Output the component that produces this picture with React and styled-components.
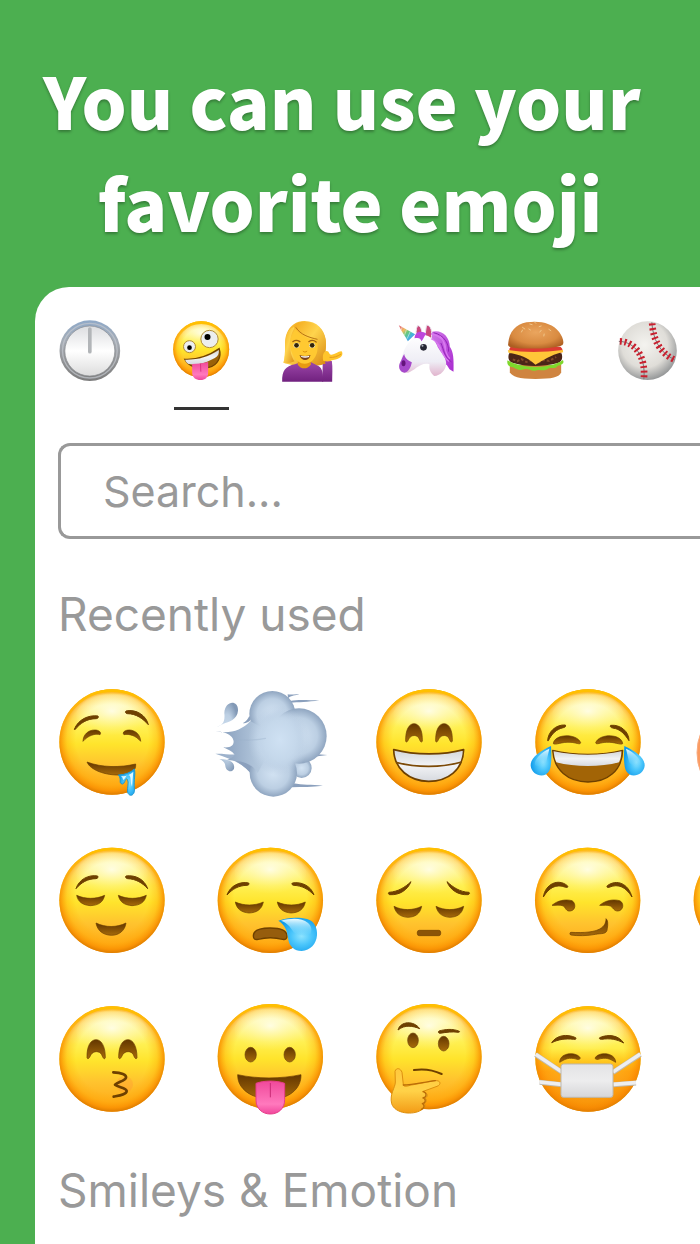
import React from 'react';
import styled, { createGlobalStyle } from 'styled-components';

const GlobalStyle = createGlobalStyle`
    body {
        margin: 0;
        background-color: #4caf50;
    }
    * {
        box-sizing: border-box;
    }
`;

const Page = styled.main`
    min-height: 100vh;
    display: flex;
    flex-direction: column;
    overflow: hidden;
    background-color: #4caf50;
    font-family: Inter, 'Liberation Sans', sans-serif;
`;

const Headline = styled.h1`
    margin: 0;
    padding: 48px 0 35px;
    color: #fff;
    font-family: 'Noto Sans CJK JP', 'Noto Sans', sans-serif;
    font-size: 71px;
    font-weight: 900;
    line-height: 102px;
    text-align: center;
    white-space: pre;
    text-shadow: 0 2px 3px rgba(0, 0, 0, 0.3);
`;

const Picker = styled.section`
    flex: 1;
    margin-left: 35px;
    background-color: #fff;
    border-top-left-radius: 34px;
`;

const Tabs = styled.nav`
    display: flex;
    padding-top: 28px;
`;

const Tab = styled.button`
    flex: none;
    width: 111px;
    padding: 0;
    border: 0;
    background: none;
    display: flex;
    flex-direction: column;
    align-items: center;
    gap: 20px;
    cursor: pointer;
    &::after {
        content: '';
        width: 55px;
        height: 3px;
        background-color: ${({ $active }) => ($active ? '#333' : 'transparent')};
    }
`;

const SearchBar = styled.form`
    display: flex;
    padding: 33px 0 0 23px;
`;

const SearchInput = styled.input`
    flex: 1;
    min-width: 0;
    height: 96px;
    padding: 0 0 0 42px;
    border: 3px solid #999;
    border-right: 0;
    border-radius: 12px 0 0 12px;
    outline: none;
    background-color: #fff;
    color: #333;
    font-family: inherit;
    font-size: 43px;
    &::placeholder {
        color: #999;
        opacity: 1;
    }
`;

const Category = styled.h2`
    margin: ${({ $top }) => $top}px 0 0 23px;
    color: #999;
    font-size: 46px;
    font-weight: 400;
    line-height: 56px;
    white-space: nowrap;
`;

const EmojiGrid = styled.div`
    display: grid;
    grid-template-columns: repeat(5, 120px);
    gap: 38px 39px;
    padding: 40px 0 0 17px;
`;

const EmojiButton = styled.button`
    padding: 0;
    border: 0;
    background: none;
    cursor: pointer;
`;

const Drawing = styled.svg`
    display: block;
    width: ${({ $size }) => $size}px;
    height: ${({ $size }) => $size}px;
`;

const SharedDefs = styled.svg`
    position: absolute;
    width: 0;
    height: 0;
`;

const Gradients = () => (
    <SharedDefs aria-hidden="true">
        <defs>
            <linearGradient id="skin" x1="0" y1="0" x2="0" y2="1">
                <stop offset="0" stopColor="#ffd21c" />
                <stop offset=".06" stopColor="#fff7b0" />
                <stop offset=".16" stopColor="#fffab4" />
                <stop offset=".36" stopColor="#fff052" />
                <stop offset=".52" stopColor="#ffe42c" />
                <stop offset=".72" stopColor="#ffc32e" />
                <stop offset="1" stopColor="#ffa314" />
            </linearGradient>
            <radialGradient id="rim" cx=".5" cy=".48" r=".52">
                <stop offset=".66" stopColor="#ffb000" stopOpacity="0" />
                <stop offset=".82" stopColor="#ffa400" stopOpacity=".35" />
                <stop offset=".93" stopColor="#f98f00" stopOpacity=".8" />
                <stop offset="1" stopColor="#dd7c00" />
            </radialGradient>
            <radialGradient id="shine" cx=".5" cy=".4" r=".55">
                <stop offset="0" stopColor="#fff" stopOpacity=".7" />
                <stop offset="1" stopColor="#fff8a0" stopOpacity="0" />
            </radialGradient>
            <linearGradient id="topRim" x1="0" y1="0" x2="0" y2="1">
                <stop offset="0" stopColor="#ffc000" />
                <stop offset=".5" stopColor="#ffa000" stopOpacity="0" />
            </linearGradient>
            <linearGradient id="brown" x1="0" y1="0" x2="0" y2="1">
                <stop offset="0" stopColor="#633700" />
                <stop offset="1" stopColor="#a66a0a" />
            </linearGradient>
            <linearGradient id="teeth" x1="0" y1="0" x2="0" y2="1">
                <stop offset="0" stopColor="#d3d6da" />
                <stop offset=".5" stopColor="#f2f3f5" />
                <stop offset="1" stopColor="#d6d9df" />
            </linearGradient>
            <linearGradient id="tongue" x1="0" y1="0" x2="0" y2="1">
                <stop offset="0" stopColor="#f0499a" />
                <stop offset=".7" stopColor="#ff79bd" />
                <stop offset="1" stopColor="#f0469c" />
            </linearGradient>
            <radialGradient id="tear" cx=".6" cy=".55" r=".6">
                <stop offset="0" stopColor="#8fe4ff" />
                <stop offset=".45" stopColor="#49c5fb" />
                <stop offset="1" stopColor="#119bea" />
            </radialGradient>
            <linearGradient id="tearShine" x1="0" y1="0" x2="0" y2="1">
                <stop offset="0" stopColor="#effcff" />
                <stop offset="1" stopColor="#62cefb" stopOpacity=".2" />
            </linearGradient>
            <radialGradient id="cloud" cx=".5" cy=".5" r=".55">
                <stop offset="0" stopColor="#d3e3f3" />
                <stop offset=".6" stopColor="#bccfe3" />
                <stop offset="1" stopColor="#8299b6" />
            </radialGradient>
            <linearGradient id="wind" x1="0" y1="0" x2="1" y2="0">
                <stop offset="0" stopColor="#8299b8" />
                <stop offset=".7" stopColor="#b4c8dd" />
                <stop offset="1" stopColor="#c5d8ea" />
            </linearGradient>
            <radialGradient id="cloudCore">
                <stop offset="0" stopColor="#cfe1f3" />
                <stop offset=".65" stopColor="#c5d8eb" stopOpacity=".95" />
                <stop offset="1" stopColor="#b9cce1" stopOpacity="0" />
            </radialGradient>
            <linearGradient id="steel" x1="0" y1="0" x2="0" y2="1">
                <stop offset="0" stopColor="#8fa9c8" />
                <stop offset=".35" stopColor="#a5acb5" />
                <stop offset=".6" stopColor="#96989b" />
                <stop offset="1" stopColor="#7c7c7c" />
            </linearGradient>
            <linearGradient id="dial" x1="0" y1="0" x2="0" y2="1">
                <stop offset="0" stopColor="#dcdde0" />
                <stop offset=".5" stopColor="#fff" />
                <stop offset="1" stopColor="#dcdcdc" />
            </linearGradient>
            <linearGradient id="hair" x1="0" y1="0" x2="1" y2="1">
                <stop offset="0" stopColor="#f3a81b" />
                <stop offset=".45" stopColor="#ffd44d" />
                <stop offset="1" stopColor="#d98a12" />
            </linearGradient>
            <linearGradient id="blouse" x1="0" y1="0" x2="0" y2="1">
                <stop offset="0" stopColor="#9b46a8" />
                <stop offset="1" stopColor="#71217f" />
            </linearGradient>
            <linearGradient id="coat" x1="0" y1="0" x2="0" y2="1">
                <stop offset="0" stopColor="#fff" />
                <stop offset=".65" stopColor="#eeedf5" />
                <stop offset="1" stopColor="#e1b4cd" />
            </linearGradient>
            <linearGradient id="mane" x1="0" y1="0" x2="1" y2="1">
                <stop offset="0" stopColor="#d17be8" />
                <stop offset="1" stopColor="#a92bd0" />
            </linearGradient>
            <linearGradient id="horn" x1="0" y1="0" x2="1" y2="1">
                <stop offset=".05" stopColor="#e26674" />
                <stop offset=".3" stopColor="#f3bd62" />
                <stop offset=".48" stopColor="#69c978" />
                <stop offset=".7" stopColor="#42b6df" />
                <stop offset="1" stopColor="#8056d7" />
            </linearGradient>
            <radialGradient id="bun" cx=".5" cy=".4" r=".65">
                <stop offset="0" stopColor="#eaa55e" />
                <stop offset=".65" stopColor="#d98b41" />
                <stop offset="1" stopColor="#ad5f22" />
            </radialGradient>
            <radialGradient id="ball" cx=".45" cy=".4" r=".6">
                <stop offset="0" stopColor="#f4f3ef" />
                <stop offset=".65" stopColor="#dfddd8" />
                <stop offset="1" stopColor="#97999a" />
            </radialGradient>
            <linearGradient id="hand" x1="0" y1="0" x2="0" y2="1">
                <stop offset="0" stopColor="#ffc83d" />
                <stop offset=".5" stopColor="#ffd248" />
                <stop offset="1" stopColor="#f39b16" />
            </linearGradient>
            <linearGradient id="mask" x1="0" y1="0" x2="0" y2="1">
                <stop offset="0" stopColor="#e3e3e5" />
                <stop offset=".5" stopColor="#ededee" />
                <stop offset="1" stopColor="#d6d6d8" />
            </linearGradient>
            <linearGradient id="flush" x1="0" y1="0" x2="0" y2="1">
                <stop offset=".4" stopColor="#ff8a00" stopOpacity="0" />
                <stop offset=".62" stopColor="#ff8400" stopOpacity=".55" />
                <stop offset="1" stopColor="#f07d00" stopOpacity=".4" />
            </linearGradient>
        </defs>
    </SharedDefs>
);

const Emoji = ({ x, y, span = 360, children }) => (
    <Drawing $size={span / 3} viewBox={`${x} ${y} ${span} ${span}`} aria-hidden="true">
        {children}
    </Drawing>
);

const Head = ({ cx, cy, r = 158 }) => (
    <g>
        <circle cx={cx} cy={cy} r={r} fill="url(#skin)" />
        <circle cx={cx} cy={cy} r={r} fill="url(#rim)" />
        <ellipse cx={cx} cy={cy - r * 0.5} rx={r * 0.68} ry={r * 0.42} fill="url(#shine)" />
        <circle cx={cx} cy={cy} r={r - 4} fill="none" stroke="url(#topRim)" strokeWidth="8" />
    </g>
);

const Lines = ({ d, width = 8 }) => (
    <path d={d} fill="none" stroke="#6e4000" strokeWidth={width} strokeLinecap="round" strokeLinejoin="round" />
);

const Shape = ({ d }) => <path d={d} fill="url(#brown)" stroke="#6a3c00" strokeWidth="2" strokeLinejoin="round" />;

// eyebrows are filled so that they swell in the middle
const Brows = ({ d }) => <path d={d} fill="#6e4000" stroke="#6e4000" strokeWidth="3" strokeLinejoin="round" />;

const Clock = () => (
    <Emoji x={73.5} y={105} span={216}>
        <circle cx="178" cy="212" r="91" fill="url(#steel)" />
        <circle cx="178" cy="212" r="82" fill="none" stroke="#c3c8ce" strokeWidth="4" opacity=".7" />
        <circle cx="178" cy="213" r="75" fill="url(#dial)" stroke="#8a8d91" strokeWidth="2" />
        <path d="M178 147v68" stroke="#b2b5b8" strokeWidth="11" strokeLinecap="round" />
    </Emoji>
);

const Zany = () => (
    <Emoji x={406.5} y={105} span={216}>
        <Head cx={512} cy={208} r={84} />
        <circle cx="477" cy="200" r="18" fill="#eceef0" stroke="#b18b35" strokeWidth="3" />
        <circle cx="477" cy="203" r="7" fill="#000" />
        <circle cx="537" cy="177" r="26" fill="#eceef0" stroke="#b18b35" strokeWidth="3" />
        <circle cx="531" cy="171" r="9" fill="#000" />
        <path d="M463 238c38 2 70-9 103-32 8 25-5 51-31 56-34 7-62-3-72-24z" fill="#9b6208" stroke="#704100" strokeWidth="4" />
        <path d="M464 239c38 1 70-8 101-29 1 11-2 19-12 24-24 14-55 23-79 18-5-3-8-7-10-13z" fill="url(#teeth)" />
        <path d="M485 252c16 0 32-2 48-6v32c0 14-9 22-23 22s-25-8-25-22z" fill="url(#tongue)" />
        <path d="M510 251l1 24" stroke="#dc3383" strokeWidth="3" />
    </Emoji>
);

const Woman = () => (
    <Emoji x={49.5} y={45} span={216}>
        <path d="M69 188c10-30-1-62 10-88 9-24 29-37 53-37 38 0 60 26 64 58 3 25-6 49-1 70-38 12-90 10-126-3z" fill="url(#hair)" />
        <path d="M65 245c-1-33 10-46 38-52l17-6h32l17 9c14 5 19 16 19 49z" fill="url(#blouse)" />
        <path d="M187 183h27c3 20 1 41 1 62h-30z" fill="url(#blouse)" />
        <path d="M112 177h39v17c-11 15-30 14-39 0z" fill="#e79a12" />
        <path d="M89 128c1-15 8-30 16-42l60 25c8 14 8 30 5 44-5 21-19 36-38 36-27-1-43-32-43-63z" fill="#ffc931" />
        <path d="M104 80c-9 16-14 26-16 50 0 22 5 42 14 54-13 6-25 7-33 4 9-29 0-62 11-88 4-9 13-18 24-20z" fill="url(#hair)" />
        <path d="M100 80c9-18 39-18 57-9 27 12 38 33 39 54 1 24-6 47-1 66-13 2-19 0-30-4 8-20 10-43 7-66-26-4-55-12-72-41z" fill="url(#hair)" />
        <path d="M106 82c14 22 38 30 65 36" fill="none" stroke="#b87412" strokeWidth="3" />
        <path d="M97 125c8-6 14-5 21 0M145 125c8-6 15-5 22 1" fill="none" stroke="#9d6312" strokeWidth="4" strokeLinecap="round" />
        <ellipse cx="108" cy="136" rx="9" ry="8" fill="#eee8c8" />
        <ellipse cx="155" cy="136" rx="9" ry="8" fill="#eee8c8" />
        <circle cx="108" cy="136" r="7" fill="#332307" />
        <circle cx="155" cy="136" r="7" fill="#332307" />
        <path d="M117 165c11 4 22 4 33 0-3 19-28 21-33 0z" fill="#79411c" />
        <path d="M120 167c9 2 18 2 26 0v4c-8 3-17 3-23 0z" fill="#fff" />
        <path d="M127 153c4 4 8 4 13 0" fill="none" stroke="#db910d" strokeWidth="3" />
        <path d="M188 182c-3-16 1-28 10-29 9 0 6 10 14 11 11 1 21-11 31-10 4 4 4 13-3 18-13 9-27 8-29 11-8 2-17 2-23-1z" fill="#ffc52b" />
        <path d="M207 172c13 1 23-2 35-10" fill="none" stroke="#e49a19" strokeWidth="3" />
    </Emoji>
);

const Unicorn = () => (
    <Emoji x={382.5} y={45} span={216}>
        <path d="M415 76l49 27-22 21c-7-15-20-29-27-48z" fill="url(#horn)" />
        <path d="M425 81l-3 10M438 88l-6 18M449 95l-9 21" stroke="#fff" strokeWidth="2" opacity=".7" />
        <path d="M510 97c30-12 57 10 58 43 11 16 12 35 11 75l-12-7-8-13c-27-12-39-47-49-98z" fill="url(#mane)" />
        <path d="M471 77c10-1 15 15 14 37l-15 3c-5-15-4-30 1-40zM498 75c14 1 18 20 14 42h-20z" fill="#c9487c" stroke="#eae4ef" strokeWidth="3" />
        <path d="M430 153c10-24 29-43 50-47 25-5 45 15 52 36 8 15 24 28 25 47 0 22-17 38-36 39-11-10-16-19-14-35-28-8-44 20-64 25-21 2-31-12-24-29 4-14 6-24 11-36z" fill="url(#coat)" />
        <path d="M431 162c2 13 11 19 23 25-3 15-9 29-22 31-15-1-20-18-13-31 5-8 7-18 12-25z" fill="#a74acb" />
        <ellipse cx="429" cy="190" rx="6" ry="9" fill="#64147c" />
        <circle cx="489" cy="142" r="10" fill="#252533" />
        <circle cx="486" cy="137" r="3" fill="#aeb1be" />
        <path d="M462 115c2-22 21-24 37-13-8 2-7 13-17 22 0-8-6-12-20-9z" fill="#be45dd" />
        <path d="M513 102c24 4 44 21 42 48M535 103c22 16 12 51 32 72M531 134c14 14 12 32 33 49M513 117c18 7 23 16 28 29" fill="none" stroke="#d878ef" strokeWidth="4" strokeLinecap="round" />
        <path d="M519 98c33 7 47 35 45 57M541 129c10 21 8 39 32 57" fill="none" stroke="#9522b9" strokeWidth="3" />
    </Emoji>
);

const Burger = () => (
    <Emoji x={55.5} y={45} span={216}>
        <path d="M88 195h154v22c-5 15-28 20-77 20-51 0-70-7-77-20z" fill="#cf8440" />
        <path d="M86 160c50-7 103-8 157 0 5 14 1 27-14 30-45 11-93 11-131-1-14-4-17-17-12-29z" fill="#4b2517" />
        <path d="M97 178l13 6 12-7 16 9 16-6 18 8 17-8 17 3 21-12" fill="none" stroke="#80492a" strokeWidth="6" strokeDasharray="8 6" />
        <path d="M81 181c26 15 52 19 84 20 34-1 62-7 82-21 6 9-2 14-15 17-8 11-17 5-27 8-15 12-25 1-42 7-14 1-19-8-33-4-13 6-23-1-32-6-13-1-20-9-17-21z" fill="#7fd82c" />
        <path d="M91 140h149c8 7 8 15 0 19H94c-10-6-9-14-3-19z" fill="#dd3b32" />
        <path d="M82 150c45 8 107 8 165 0l1 7c-26 4-45 15-83 37-24-23-45-29-81-36z" fill="#ffc638" />
        <path d="M83 133c3-40 23-59 55-66 36-6 77 0 98 29 9 12 17 31 10 39-23 14-145 13-159 5-3-2-5-4-4-7z" fill="url(#bun)" />
        <path d="M126 82l7 5M148 72l7 2M176 80l6-2M178 96l4-5M123 96l3-6M145 87l5 3M191 102l-1 6M205 88l6 4M162 66l4 4" stroke="#f0c78b" strokeWidth="3" strokeLinecap="round" />
    </Emoji>
);

const Baseball = () => (
    <Emoji x={388.5} y={45} span={216}>
        <circle cx="501" cy="152" r="88" fill="url(#ball)" />
        <path d="M415 124c47 1 82 45 75 114M514 67c3 50 23 91 68 112" fill="none" stroke="#77777a" strokeWidth="3" />
        <path d="M418 124c45 1 79 45 72 114M515 70c3 48 23 88 65 108" fill="none" stroke="#c9202f" strokeWidth="20" strokeDasharray="6 8" />
    </Emoji>
);

const Drooling = () => (
    <Emoji x={6} y={6}>
        <Head cx={186} cy={186} />
        <Brows d="M73 148c11-29 42-44 71-40 2 4 1 7-5 8-28 0-48 13-64 33zM228 93c31-7 61 14 67 41-15-17-36-33-63-33-6-1-7-5-4-8z" />
        <Shape d="M99 184c1-21 16-34 35-34 14 0 21 8 16 14-14-4-36 2-51 20z" />
        <Shape d="M272 184c-1-20-15-33-34-34-15 0-22 8-16 14 15-3 35 2 50 20z" />
        <Shape d="M111 246c44 17 99 17 146 6 2 20-14 33-44 33-49 2-93-16-102-39z" />
        <path d="M205 285c21-1 36-7 48-18 4 14-2 31 0 59 3 20-15 27-20 11-2-15 5-30-1-39-6-7-7 14-15 14-13-2 0-15-12-27z" fill="url(#tear)" stroke="#1f98d1" strokeWidth="3" />
        <path d="M213 288c14 2 28-4 37-13l-4 45c-6-14-2-32-9-34-8-3-10 8-16 14-4-3-2-8-8-12z" fill="#dff8ff" />
    </Emoji>
);

const Dash = () => (
    <Emoji x={483} y={6}>
        <path d="M496 221c49-1 70 13 106-19l14 100c-24-46-58-60-120-81z" fill="#9db2cc" />
        <path d="M713 43c13 2 22-2 35 0-11 4-24 3-34 12zM720 63c28-6 54-2 88-2-34 6-62 5-89 8zM730 310c28 5 53 4 89 7-33 5-63 3-94 5zM795 222l37 3-40 5zM578 130c11-5 16-14 20-22l5 8c-4 9-11 13-25 14zM547 237c29 2 51 15 65 31v22c-22-25-37-37-65-53z" fill="#8ba0bd" />
        <circle cx="755" cy="264" r="30" fill="url(#cloud)" />
        <circle cx="667" cy="102" r="69" fill="url(#cloud)" />
        <circle cx="747" cy="168" r="83" fill="url(#cloud)" />
        <circle cx="670" cy="279" r="71" fill="url(#cloud)" />
        <path d="M497 154c43 8 77-2 104-31l82 46-60 110c-20-37-58-35-92-39 12-6 20-9 23-16-8-10-19-15-34-22 36 4 37-23 21-35-9-8-23-11-44-13z" fill="url(#wind)" />
        <ellipse cx="686" cy="182" rx="92" ry="106" fill="url(#cloudCore)" />
        <ellipse cx="690" cy="180" rx="74" ry="92" fill="url(#cloudCore)" />
        <path d="M556 178c32 5 62 2 90-3" fill="none" stroke="#9bb1ca" strokeWidth="4" opacity=".4" strokeLinecap="round" />
        <path d="M497 141c20-4 29-13 26-42 2-39 43-40 41-7-2 27-28 33-44 39-8 4-13 9-23 10zM508 238c37-1 47 13 44 28-8 15-25 6-26-8-1-10-6-16-18-20z" fill="url(#cloud)" />
    </Emoji>
);

const Beaming = () => (
    <Emoji x={15} y={6}>
        <Head cx={192} cy={186} />
        <Shape d="M122 184c-1-34 10-53 25-53 16 0 26 20 25 53-4 5-7-1-9-7-6-14-24-14-32 0-2 6-6 12-9 7z" />
        <Shape d="M212 184c-1-34 10-53 25-53 16 0 26 20 25 53-4 5-7-1-9-7-6-14-24-14-32 0-2 6-6 12-9 7z" />
        <path d="M86 209c63 17 151 17 210 0-2 61-47 95-105 95-58-1-103-36-105-95z" fill="url(#teeth)" stroke="#6e4000" strokeWidth="5" strokeLinejoin="round" />
        <path d="M93 247c61 16 135 17 197-1" fill="none" stroke="#7c4a07" strokeWidth="5" />
    </Emoji>
);

const Joy = () => (
    <Emoji x={492} y={6}>
        <Head cx={669} cy={186} />
        <Brows d="M548 182c1-26 24-49 53-47 2 4 0 7-6 8-21 4-35 19-45 39zM737 136c29-3 55 18 55 46-13-20-26-35-49-38-6-1-9-5-6-8z" />
        <Shape d="M565 191c3-30 70-32 82-3-2 8-14-1-32-1-24-2-43 9-50 4z" />
        <Shape d="M773 191c-3-30-69-32-81-3 2 8 14-1 32-1 24-2 43 9 49 4z" />
        <path d="M563 211c64 16 148 16 210 0-1 61-46 95-104 95-60-1-103-36-106-95z" fill="#a26406" stroke="#6e4000" strokeWidth="4" strokeLinejoin="round" />
        <path d="M566 214c62 14 143 14 203 0 0 12-2 23-7 33-55 15-132 15-188 0-5-11-7-22-8-33z" fill="url(#teeth)" />
        <path d="M558 198c-32 15-62 34-61 59 3 29 41 40 55 17 8-13 8-46 6-76z" fill="url(#tear)" />
        <path d="M778 198c32 15 62 34 61 59-3 29-41 40-55 17-8-13-8-46-6-76z" fill="url(#tear)" />
        <path d="M553 206c-28 13-46 33-43 50 13 5 31-2 34-11zM783 206c28 13 46 33 43 50-13 5-31-2-34-11z" fill="url(#tearShine)" />
    </Emoji>
);

const Flushed = () => (
    <Emoji x={969} y={6}>
        <circle cx="1155" cy="218" r="159" fill="#fb9a60" stroke="#f9ab80" strokeWidth="3" />
    </Emoji>
);

const Relieved = () => (
    <Emoji x={6} y={0}>
        <Head cx={186} cy={181} />
        <Brows d="M78 146c9-28 38-43 65-38 2 4 1 7-5 8-25 0-45 12-60 30zM228 108c28-4 56 10 65 38-16-18-36-29-60-30-6-1-8-5-5-8z" />
        <Shape d="M80 166c26 12 58 12 84 0-5 22-20 30-43 31-23-2-37-11-41-31z" />
        <Shape d="M205 166c26 12 58 12 84 0-5 22-20 30-43 31-23-2-37-11-41-31z" />
        <Shape d="M138 249c29 14 62 14 90 0-3 22-20 37-44 37-25-1-42-14-46-37z" />
    </Emoji>
);

const Sleepy = () => (
    <Emoji x={483} y={0}>
        <Head cx={661} cy={181} />
        <Brows d="M531 165c9-27 38-42 65-36 2 4 1 6-5 7-25 0-45 12-60 29zM727 129c28-5 56 9 65 36-16-17-36-28-60-29-6-1-8-4-5-7z" />
        <Shape d="M556 186c26 12 58 12 84 0-5 23-20 32-43 33-23-2-37-12-41-33z" />
        <Shape d="M682 186c26 12 58 12 84 0-5 23-20 32-43 33-23-2-37-12-41-33z" />
        <path d="M610 288c0-16 14-24 50-24s51 8 51 24c0 9-5 12-13 10-24-6-50-6-74 0-9 2-14-1-14-10z" fill="#965d0d" stroke="#6e4000" strokeWidth="4" />
        <path d="M685 242c28-11 63-11 86-5 22 6 32 27 30 49-2 26-20 46-46 47-22 0-37-15-40-34-4-27-8-43-30-57z" fill="url(#tear)" />
        <path d="M693 242c31-8 62-9 81 7 11 10 12 22 8 32-16 10-44 6-53-7-9-15-19-26-36-32z" fill="url(#tearShine)" />
    </Emoji>
);

const Pensive = () => (
    <Emoji x={15} y={0}>
        <Head cx={192} cy={181} />
        <Brows d="M72 157c27-2 48-15 66-32-10 24-33 41-64 39-4-1-5-5-2-7zM246 125c18 17 39 31 66 32 3 3 1 6-3 7-30 2-54-15-63-39z" />
        <Shape d="M87 199c25 13 57 13 83 0-5 23-19 32-42 33-23-2-36-12-41-33z" />
        <Shape d="M213 199c25 13 57 13 83 0-5 23-19 32-42 33-23-2-36-12-41-33z" />
        <rect x="157" y="271" width="70" height="16" rx="6" fill="#8b5407" stroke="#6e4000" strokeWidth="2" />
    </Emoji>
);

const Smirk = () => (
    <Emoji x={492} y={0}>
        <Head cx={668} cy={181} />
        <Brows d="M535 171c6-39 44-57 72-34 3 4 1 6-5 5-29-12-51 2-67 29zM727 137c29-21 63-6 74 34-17-28-40-42-69-29-5 1-8-1-5-5z" />
        <Shape d="M561 196c17-15 40-19 60-14 12 7 12 29-5 31-13 2-14-10-21-15-10-5-22-1-34-2z" />
        <Shape d="M704 196c17-15 40-19 60-14 15 7 11 30-5 31-12 1-15-11-23-15-9-4-20-1-32-2z" />
        <Shape d="M618 277c38 2 75 0 92-14 11-8 13-19 13-27 6 4 6 17 4 29-1 20-17 14-35 18-26 5-54 5-75 2-4-4-2-8 1-8z" />
    </Emoji>
);

const PlainFace = () => (
    <Emoji x={969} y={0}>
        <Head cx={1144} cy={181} />
    </Emoji>
);

const Kissing = () => (
    <Emoji x={6} y={9}>
        <Head cx={186} cy={192} />
        <Shape d="M111 188c-1-35 11-54 27-54s28 19 28 54c-3 8-8-1-11-9-6-12-25-12-32 0-4 8-9 17-12 9z" />
        <Shape d="M206 188c0-35 11-54 28-54 15 0 27 19 27 54-3 8-8-1-11-9-6-12-25-12-32 0-4 8-9 17-12 9z" />
        <circle cx="224" cy="268" r="25" fill="#ff803d" opacity=".22" />
        <path d="M190 232c24 1 40 7 38 16-2 9-24 13-33 21 9 8 34 9 35 19 0 11-24 14-39 17" fill="none" stroke="#6e4000" strokeWidth="8" strokeLinecap="round" strokeLinejoin="round" />
    </Emoji>
);

const Tongue = () => (
    <Emoji x={483} y={9}>
        <Head cx={661} cy={185} />
        <ellipse cx="602" cy="179" rx="17" ry="22" fill="url(#brown)" stroke="#70450b" strokeWidth="2" />
        <ellipse cx="719" cy="179" rx="17" ry="22" fill="url(#brown)" stroke="#70450b" strokeWidth="2" />
        <Shape d="M563 239c59 13 128 13 190 0 1 44-38 74-93 74-54-2-98-30-97-74z" />
        <path d="M618 265c25-9 61-9 86 0v49c0 27-19 43-43 43s-43-16-43-42z" fill="url(#tongue)" stroke="#e73c89" strokeWidth="3" />
        <path d="M661 264v43" stroke="#c92b75" strokeWidth="3" />
    </Emoji>
);

const Thinking = () => (
    <Emoji x={15} y={9}>
        <Head cx={192} cy={185} />
        <Brows d="M99 105c7-27 48-29 65-4-20-8-44-13-65 4zM222 108c18-5 41-8 61 1 2 2-1 3-3 3-18-3-37 0-56 3-4-1-5-5-2-7z" />
        <ellipse cx="144" cy="136" rx="16" ry="22" fill="url(#brown)" stroke="#70450b" strokeWidth="2" />
        <ellipse cx="236" cy="146" rx="16" ry="22" fill="url(#brown)" stroke="#70450b" strokeWidth="2" />
        <Lines d="M147 225c33-5 58 0 83 12" width={6} />
        <path d="M90 229c4-13 17-9 21 3l4 37c2 9 15 3 25 1l70-13c17-2 20 12 6 17l-44 16c20 4 17 16 8 19 8 7 3 14-2 16 5 10-1 17-9 20-24 16-79 12-89-19-7-29 11-48 11-65z" fill="url(#hand)" stroke="#dd900f" strokeWidth="3" />
        <path d="M115 270c29 0 58-8 96-13M176 290c10 5 10 15-2 19M177 310c7 6 4 14-5 16M174 327c6 6 3 13-5 16" fill="none" stroke="#b96c09" strokeWidth="4" strokeLinecap="round" />
    </Emoji>
);

const Masked = () => (
    <Emoji x={492} y={9}>
        <Head cx={669} cy={192} />
        <circle cx="669" cy="192" r="155" fill="url(#flush)" />
        <Brows d="M560 143c15-23 46-27 72-15 2 4 0 6-6 5-25-3-45 0-66 10zM704 128c27-12 57-7 72 16-20-11-41-15-66-11-6 0-8-2-6-5z" />
        <Shape d="M584 202c0-32 55-32 62-12-7 8-11 0-26 0-18-1-28 8-36 12z" />
        <Shape d="M752 202c-1-32-55-32-62-12 7 8 11 0 26 0 18-1 28 8 36 12z" />
        <path d="M512 179l78 52M524 262l67 7M826 178l-82 54M813 264l-68 5" stroke="#bfb9ad" strokeWidth="15" />
        <path d="M512 178l78 52M524 261l67 7M826 177l-82 54M813 263l-68 5" stroke="#eeeeef" strokeWidth="11" />
        <rect x="588" y="207" width="156" height="100" rx="8" fill="url(#mask)" stroke="#bdb8ad" strokeWidth="3" />
    </Emoji>
);

const tabs = [
    { name: 'Recent', Icon: Clock },
    { name: 'Smileys', Icon: Zany, active: true },
    { name: 'People', Icon: Woman },
    { name: 'Animals', Icon: Unicorn },
    { name: 'Food', Icon: Burger },
    { name: 'Activities', Icon: Baseball },
];

const recent = [
    ['Drooling', Drooling],
    ['Dash', Dash],
    ['Beaming', Beaming],
    ['Joy', Joy],
    ['Flushed', Flushed],
    ['Relieved', Relieved],
    ['Sleepy', Sleepy],
    ['Pensive', Pensive],
    ['Smirk', Smirk],
    ['Face', PlainFace],
    ['Kissing', Kissing],
    ['Tongue', Tongue],
    ['Thinking', Thinking],
    ['Masked', Masked],
];

const App = () => {
    return (
        <Page>
            <GlobalStyle />
            <Gradients />
            <Headline>{'You can use your \nfavorite emoji'}</Headline>
            <Picker>
                <Tabs>
                    {tabs.map(({ name, Icon, active }) => (
                        <Tab key={name} type="button" aria-label={name} $active={active}>
                            <Icon />
                        </Tab>
                    ))}
                </Tabs>
                <SearchBar>
                    <SearchInput type="text" placeholder="Search..." aria-label="Search" />
                </SearchBar>
                <Category $top={47}>Recently used</Category>
                <EmojiGrid>
                    {recent.map(([name, Icon]) => (
                        <EmojiButton key={name} type="button" aria-label={name}>
                            <Icon />
                        </EmojiButton>
                    ))}
                </EmojiGrid>
                <Category $top={44}>Smileys &amp; Emotion</Category>
            </Picker>
        </Page>
    );
}

export default App;
